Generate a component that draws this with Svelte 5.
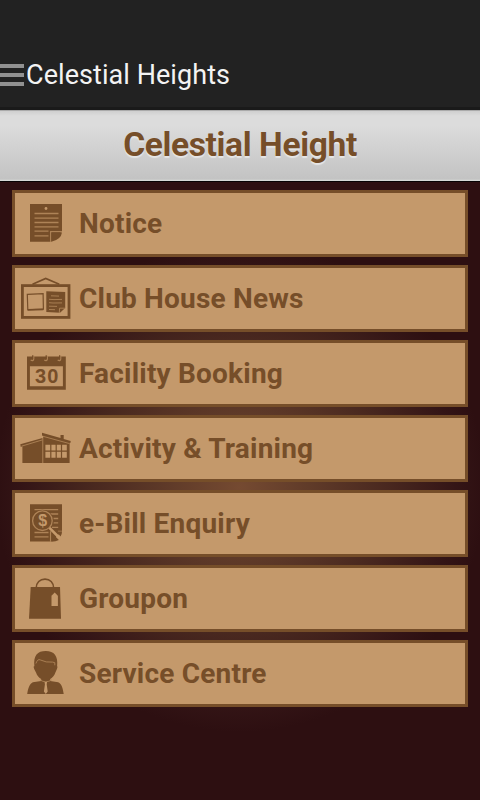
<script lang="ts">
  const title = 'Celestial Heights';
  const estate = 'Celestial Height';

  const items = [
    { icon: 'notice', label: 'Notice' },
    { icon: 'news', label: 'Club House News' },
    { icon: 'booking', label: 'Facility Booking' },
    { icon: 'activity', label: 'Activity & Training' },
    { icon: 'bill', label: 'e-Bill Enquiry' },
    { icon: 'groupon', label: 'Groupon' },
    { icon: 'service', label: 'Service Centre' },
  ];
</script>

<div class="screen">
  <header class="action-bar">
    <svg class="drawer" viewBox="0 0 24 22" aria-hidden="true">
      <path d="M0 2h24M0 11h24M0 20h24" />
    </svg>
    <span class="app-title">{title}</span>
  </header>

  <div class="banner"><h1>{estate}</h1></div>

  <nav class="menu">
    {#each items as item (item.icon)}
      <button class="item">
        <svg class="icon" viewBox="0 0 60 61" aria-hidden="true">
          {#if item.icon === 'notice'}
            <path class="fill" d="M15 11h32v27.3L36 48.8H15z" />
            <circle class="cut" cx="31" cy="15.5" r="1.4" />
            <path class="line" d="M19.5 20.5h24M19.5 25.2h24M19.5 29.5h24M19.5 33.8h24M19.5 38.2h14M19.5 42.8h14" />
            <path class="line" d="M35.7 49V38.7H47" />
            <path class="fill" d="M36.3 39.4H47q-1 7-10.7 9.3z" />
          {:else if item.icon === 'news'}
            <path class="stroke" d="M17.5 16.3L30.7 10.4L44.3 16.3" />
            <rect class="stroke frame" x="7.4" y="17.6" width="46.6" height="31.8" />
            <path class="stroke thin" d="M12.3 26.3l15.8-.6.3 15.4-15.6.6z" />
            <path class="stroke" d="M12.6 42l15.7-.6" />
            <path class="fill" d="M31.3 23.2l18.9.8v16l-5.2 4.8-13.7-.8z" />
            <path class="line soft" d="M36 27.8l8 .3M34 31.3l5 .3 8-.2M34 34.7l4 .3 9-.1M34 38.2l8 .2M34 41.5l6 .2M44.3 45l.3-4.8h5.6" />
          {:else if item.icon === 'booking'}
            <path class="fill" fill-rule="evenodd" d="M12 13.4h38.8v33.3H12zM14.9 23.3v20h33v-20z" />
            <path class="line" d="M15.7 17.2q3 1.2 3-1.5v-3M29.3 17.2q3 1.2 3-1.5v-3M42.7 17.2q3 1.2 3-1.5v-3" />
            <path class="stroke thin" d="M17.7 12.2v4M31.2 12.2v4M44.6 12.2v4" />
            <text class="day" x="32.2" y="40.2" text-anchor="middle">30</text>
          {:else if item.icon === 'activity'}
            <path class="fill" d="M5.3 26.3L27.5 20v25H7.4V28.5l-1.6.4z" />
            <path class="fill" fill-rule="evenodd" d="M27 14.8l18.5 5.2v-3h3.2v4l7 2-.3 2-.8-.2V45H28.2V18l-1.2-.6zM30.4 26.7v13h21.4v-13z" />
            <path class="line soft" d="M6.5 28.2L27 22M28 18.3l26.5 7.3" />
            <path class="stroke thin" d="M30 33.2h22M35.8 26v14M41.2 26v14M46.5 26v14" />
          {:else if item.icon === 'bill'}
            <path class="fill" d="M15 11.3h32v27L36 48.4H15z" />
            <path class="line" d="M19.5 16.6h23.7M35 21h8.2M38.5 25.5h4.7M38.5 29.8h4.7M37 34.3h6.2M19.5 39.5h14M19.5 43.8h14" />
            <circle class="fill" cx="27.4" cy="27.7" r="11" />
            <circle class="line" cx="27.4" cy="27.7" r="9.8" />
            <text class="dollar" x="27.7" y="33.4" text-anchor="middle">$</text>
            <path class="line" d="M35.6 49V38.3M47 38.5h-4" />
            <path class="handle" d="M34.5 34.8L45.5 46" />
            <path class="fill" d="M36.3 39.5l7.6 7.6q-3 1.6-7.6 1.7zM41.5 38.5H47q0 3-1.5 5z" />
          {:else if item.icon === 'groupon'}
            <path class="stroke" d="M21.2 20c0-5.5 3.8-8.9 8.8-8.9s8.6 3.4 8.6 8.9" />
            <path class="fill" d="M15.7 19H45l1 31.8H14z" />
            <path class="cut" d="M39.7 24.6l3.2 3.2v10.3h-6.4V27.8z" />
          {:else}
            <path class="fill" d="M19.4 23.2C18.2 12.5 22.5 8 30.8 8s12.5 5 11.3 15.2q1.3 0-1.7 6.2c-1 3-3.2 5.4-5.2 6.6v2l8 1.2c3.6 1.2 4.8 6.9 5.5 11.8H12.2c.7-4.9 2.3-10.6 5.7-11.8l8.3-1.2v-2c-2-1.2-4.2-3.6-5.2-6.6-2.6-4.8-2.8-6.2-1.6-6.2z" />
            <path class="line soft" d="M20.9 20.5q1.8-5 4.3-3.6 5.8 2.9 12.4 2.2l2.2.6v2.6" />
            <path class="line soft" d="M24.8 36.8q6 4 12 0" />
            <path class="cut" d="M29.6 39h2.4l-.3 2.6 1 7-1.9 2.4-1.9-2.4 1-7z" />
          {/if}
        </svg>
        <span>{item.label}</span>
      </button>
    {/each}
  </nav>
</div>

<style>
  :global(body) {
    margin: 0;
    background: #2d0f11;
  }

  .screen {
    --brown: #764e29;
    --tan: #c4996b;
    display: flex;
    flex-direction: column;
    height: 800px;
    overflow: hidden;
    font-family: Roboto, sans-serif;
    background: radial-gradient(circle 245px at 240px 487px, #754a31 0, #603b29 28%, #49281f 60%, #341516 88%, #2d0f11 100%);
  }

  .action-bar {
    display: flex;
    align-items: center;
    gap: 2px;
    box-sizing: border-box;
    height: 110px;
    padding-top: 42px;
    border-bottom: 3px solid #1a1a1a;
    background: #222;
  }

  .drawer {
    width: 24px;
    height: 22px;
  }

  .drawer path {
    stroke: #919191;
    stroke-width: 4;
  }

  .app-title {
    color: #f3f3f3;
    font-size: 27px;
    line-height: 32px;
    letter-spacing: 0.06px;
  }

  .banner {
    box-sizing: border-box;
    height: 72px;
    border-top: 1px solid #aaa;
    border-bottom: 1px solid #080304;
    background: linear-gradient(#cfcfcf, #dcdcdc 5px, #dcdcdc 14px, #c3c3c3 68px, #dce0dc 70px);
    text-align: center;
  }

  h1 {
    margin: 0;
    color: var(--brown);
    font-size: 33.5px;
    font-weight: 700;
    line-height: 67px;
    letter-spacing: -0.35px;
    text-shadow: 0 2px 1px #e6e6e6;
  }

  .menu {
    display: flex;
    flex-direction: column;
    gap: 8px;
    padding: 8px 12px;
  }

  .item {
    display: flex;
    align-items: center;
    gap: 4px;
    box-sizing: border-box;
    height: 67px;
    padding: 0;
    border: 3px solid var(--brown);
    background: var(--tan);
    color: var(--brown);
    font: 700 28px/33px Roboto, sans-serif;
    letter-spacing: 0.2px;
    text-align: left;
  }

  .icon {
    flex: none;
    width: 60px;
    height: 61px;
  }

  .fill {
    fill: var(--brown);
  }

  .cut {
    fill: var(--tan);
  }

  .line {
    fill: none;
    stroke: #ae8357;
    stroke-width: 1.3;
  }

  .soft {
    stroke-width: 0.9;
  }

  .stroke {
    fill: none;
    stroke: var(--brown);
    stroke-width: 1.6;
  }

  .thin {
    stroke-width: 1.2;
  }

  .frame {
    stroke-width: 2.8;
  }

  .handle {
    stroke: var(--tan);
    stroke-width: 2.6;
  }

  .day {
    fill: var(--brown);
    font: 700 20px "Liberation Sans", sans-serif;
    letter-spacing: 1px;
  }

  .dollar {
    fill: var(--tan);
    font: 700 16px "Liberation Sans", sans-serif;
    letter-spacing: 0;
  }
</style>
